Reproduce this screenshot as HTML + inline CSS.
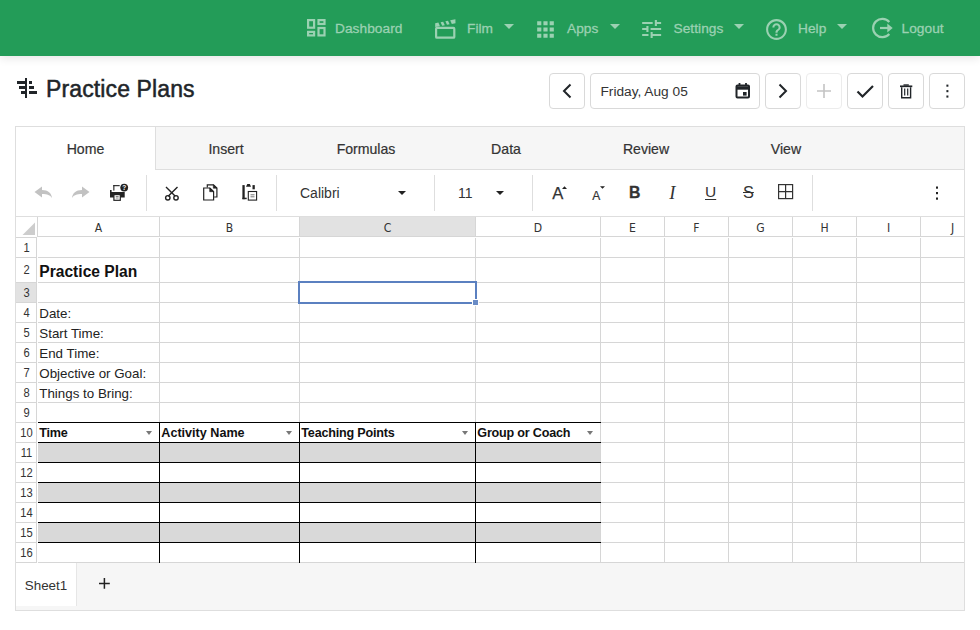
<!DOCTYPE html>
<html><head><meta charset="utf-8"><title>Practice Plans</title>
<style>
*{box-sizing:border-box;margin:0;padding:0}
html,body{width:980px;height:630px;overflow:hidden;background:#fff}
body{font-family:"Liberation Sans",sans-serif;color:#212529;position:relative}
#nav{position:absolute;left:0;top:0;width:980px;height:56px;background:#239c58;box-shadow:0 2px 9px rgba(0,0,0,.11)}
#nav .it{position:absolute;top:0;height:56px;line-height:56px;transform:translateY(0.5px);font-size:13.7px;color:#9bd1b2;white-space:nowrap;letter-spacing:0.06px;-webkit-text-stroke:0.3px #9bd1b2}
#nav svg{position:absolute;overflow:visible}
.caret{position:absolute;width:0;height:0;border-left:5px solid transparent;border-right:5px solid transparent;border-top:5px solid #9bd1b2;top:24px}
#title{position:absolute;left:46px;top:72px;letter-spacing:0.12px;font-size:23px;line-height:34px;color:#212529;white-space:nowrap;font-weight:400;-webkit-text-stroke:0.5px #212529}
.btn{position:absolute;top:73px;height:36px;width:36px;border:1px solid #d9d9d9;border-radius:4px;background:#fff}
.btn svg{position:absolute;left:0;top:0}
#date{position:absolute;left:590px;top:73px;width:170px;height:36px;border:1px solid #d9d9d9;border-radius:4px;background:#fff;font-size:13.7px;line-height:36px;padding-left:9.5px;color:#333}
#ss{position:absolute;left:15px;top:126px;width:950px;height:485px;border:1px solid #dedede;background:#fff;overflow:hidden}
#ss div{position:absolute}
#tabs{left:0;top:0;width:948px;height:43px;background:#f6f6f6;border-bottom:1px solid #dedede}
.tab{top:0;height:42px;width:140px;text-align:center;font-size:14.1px;line-height:44.600px;color:#333;-webkit-text-stroke:0.2px #333}
.tab.on{background:#fff;height:43px;border-right:1px solid #dedede;width:140px}
.sep{width:1px;top:48px;height:36px;background:#dedede}
.tb{font-size:14px;color:#333;line-height:20px;white-space:nowrap}
#ss svg{position:absolute;overflow:visible}
.ch{top:91px;height:19px;text-align:center;font-size:11.8px;line-height:20px;color:#333;font-family:'DejaVu Sans','Liberation Sans',sans-serif;transform:scaleX(.92)}
.rh{left:0;width:21px;text-align:center;font-size:12.4px;color:#333;transform:scaleX(.9)}
.c{left:0;font-size:13.35px;color:#222;white-space:nowrap}
.hd{font-weight:700;font-size:12.6px;color:#111}
.fc{width:0;height:0;border-left:3.6px solid transparent;border-right:3.6px solid transparent;border-top:4.2px solid #777}
#bar{left:0;top:436px;width:948px;height:47px;background:#f6f6f6}
</style></head><body>

<div id="nav">
<svg style="left:306.7px;top:19.2px" width="19" height="18" viewBox="0 0 19 18" fill="none" stroke="#9bd1b2" stroke-width="2.2"><rect x="1.1" y="1.1" width="6" height="7.6"/><rect x="11.5" y="1.1" width="6" height="3.9"/><rect x="1.1" y="12.9" width="6" height="3.5"/><rect x="11.5" y="9" width="6" height="7.4"/></svg>
<div class="it" style="left:335px">Dashboard</div>
<svg style="left:435.2px;top:18px" width="21" height="21" viewBox="0 0 21 21"><rect x="1.1" y="9.9" width="18.2" height="9.8" rx="0.8" fill="none" stroke="#9bd1b2" stroke-width="2.2"/><g fill="#9bd1b2"><path d="M0.20 5.20 L3.40 4.59 L5.00 8.19 L0.20 9.10 Z"/><path d="M5.60 4.17 L8.20 3.68 L9.80 7.28 L7.20 7.77 Z"/><path d="M10.40 3.26 L13.00 2.77 L14.60 6.36 L12.00 6.86 Z"/><path d="M15.20 2.35 L20.40 1.36 L20.50 5.24 L16.80 5.95 Z"/></g></svg>
<div class="it" style="left:467px">Film</div><div class="caret" style="left:503.5px"></div>
<svg style="left:533.1px;top:16.7px" width="25" height="25" viewBox="0 0 24 24" fill="#9bd1b2"><path d="M4 8h4V4H4v4zm6 12h4v-4h-4v4zm-6 0h4v-4H4v4zm0-6h4v-4H4v4zm6 0h4v-4h-4v4zm6-10v4h4V4h-4zm-6 4h4V4h-4v4zm6 6h4v-4h-4v4zm0 6h4v-4h-4v4z"/></svg>
<div class="it" style="left:567px">Apps</div><div class="caret" style="left:610px"></div>
<svg style="left:638.9px;top:17.1px" width="25.3" height="24.1" viewBox="0 0 24 24" preserveAspectRatio="none" fill="#9bd1b2"><path d="M3 17v2h6v-2H3zM3 5v2h10V5H3zm10 16v-2h8v-2h-8v-2h-2v6h2zM7 9v2H3v2h4v2h2V9H7zm14 4v-2H11v2h10zm-6-4h2V7h4V5h-4V3h-2v6z"/></svg>
<div class="it" style="left:673.5px">Settings</div><div class="caret" style="left:733.5px"></div>
<svg style="left:763.9px;top:16.6px" width="25" height="25" viewBox="0 0 24 24" fill="#9bd1b2"><path d="M11 18h2v-2h-2v2zm1-16C6.48 2 2 6.48 2 12s4.48 10 10 10 10-4.48 10-10S17.52 2 12 2zm0 18c-4.41 0-8-3.59-8-8s3.59-8 8-8 8 3.59 8 8-3.59 8-8 8zm0-14c-2.21 0-4 1.79-4 4h2c0-1.100.9-2 2-2s2 .9 2 2c0 2-3 1.750-3 5h2c0-2.250 3-2.500 3-5 0-2.210-1.790-4-4-4z"/></svg>
<div class="it" style="left:798px">Help</div><div class="caret" style="left:836.5px"></div>
<svg style="left:870px;top:16px" width="25" height="25" viewBox="0 0 25 25" fill="none" stroke="#9bd1b2" stroke-width="2.2"><path d="M19.300 6 A9.200 9.200 0 1 0 19.300 18"/><path d="M10 12 H18.500"/><path d="M17.300 7.500 L22.700 12 L17.300 16.500 Z" fill="#9bd1b2" stroke="none"/></svg>
<div class="it" style="left:901.5px">Logout</div>
</div>
<svg style="position:absolute;left:0;top:0" width="60" height="110" viewBox="0 0 60 110" fill="#212529" shape-rendering="crispEdges"><rect x="25" y="78" width="2" height="20"/><rect x="17" y="81" width="8" height="3"/><rect x="19" y="86" width="6" height="3"/><rect x="21" y="91" width="4" height="3"/><rect x="29" y="81" width="3" height="3"/><rect x="29" y="86" width="5" height="3"/><rect x="29" y="91" width="8" height="3"/></svg>
<div id="title">Practice Plans</div>
<div class="btn" style="left:549px"><svg width="34" height="34" viewBox="0 0 34 34" fill="none" stroke="#212529" stroke-width="2"><path d="M20.5 10.5 L14 17 L20.5 23.5"/></svg></div>
<div id="date">Friday, Aug 05<svg style="position:absolute;left:144px;top:9px" width="16" height="17" viewBox="0 0 16 17" fill="none" stroke="#212529" stroke-width="2"><rect x="1.500" y="2.500" width="12.500" height="12" rx="1"/><path d="M1.5 5 H14" stroke-width="3.4"/><path d="M4.5 0 V3 M11 0 V3" stroke-width="1.8"/><rect x="8" y="9" width="3.6" height="3.6" fill="#212529" stroke="none"/></svg></div>
<div class="btn" style="left:765px"><svg width="34" height="34" viewBox="0 0 34 34" fill="none" stroke="#212529" stroke-width="2"><path d="M13.5 10.5 L20 17 L13.5 23.5"/></svg></div>
<div class="btn" style="left:806px;border-color:#ececec"><svg width="34" height="34" viewBox="0 0 34 34" fill="none" stroke="#c4c4c4" stroke-width="1.6"><path d="M10 17 H24 M17 10 V24"/></svg></div>
<div class="btn" style="left:847px"><svg width="34" height="34" viewBox="0 0 34 34" fill="none" stroke="#212529" stroke-width="2.2"><path d="M9.5 17.5 L14.5 22.5 L25 12"/></svg></div>
<div class="btn" style="left:888px"><svg width="34" height="34" viewBox="0 0 34 34" fill="none" stroke="#212529" stroke-width="1.8"><path d="M11 12.300 H23.300" stroke-width="1.700"/><path d="M14.500 11 H19.800" stroke-width="1.400"/><path d="M12.700 13.300 V23.800 H21.600 V13.300" stroke-width="1.400"/><path d="M15.700 14.500 V21.500 M18.700 14.500 V21.500" stroke-width="1.200"/></svg></div>
<div class="btn" style="left:929px"><svg width="34" height="34" viewBox="0 0 34 34" fill="#212529"><rect x="16.400" y="10.600" width="2" height="2.100"/><rect x="16.400" y="16.100" width="2" height="2.100"/><rect x="16.400" y="21.500" width="2" height="2.100"/></svg></div>
<div id="ss">
<div id="tabs"></div>
<div class="tab on" style="left:0px">Home</div>
<div class="tab" style="left:140px">Insert</div>
<div class="tab" style="left:280px">Formulas</div>
<div class="tab" style="left:420px">Data</div>
<div class="tab" style="left:560px">Review</div>
<div class="tab" style="left:700px">View</div>
<div class="sep" style="left:130px"></div>
<div class="sep" style="left:260px"></div>
<div class="sep" style="left:418px"></div>
<div class="sep" style="left:516px"></div>
<div class="sep" style="left:796px"></div>
<svg style="left:0;top:43px" width="948" height="47" viewBox="16 170 948 47"><path d="M34.5 192 L42 186.5 V190 C48 190 51.5 193 52 198 C50 195 47.5 194 42 194 V197.5 Z" fill="#c2c2c2"/><path d="M89.5 192 L82 186.5 V190 C76 190 72.500 193 72 198 C74 195 76.500 194 82 194 V197.500 Z" fill="#c2c2c2"/><g fill="#222"><rect x="110" y="192" width="14.7" height="5.5"/><rect x="110" y="190" width="1.6" height="3"/><rect x="113.3" y="185.1" width="1.1" height="5.5"/><rect x="113.3" y="185.1" width="6.4" height="1.1"/><rect x="113.9" y="194.6" width="6.4" height="5.700" fill="#fff" stroke="#222" stroke-width="1.200"/><rect x="115.7" y="196" width="2.9" height="0.800" fill="#666"/><rect x="115.7" y="197.600" width="2.9" height="0.800" fill="#666"/><circle cx="124.2" cy="187.600" r="3.900"/><text x="124.2" y="190" font-size="6.500" font-weight="700" font-family="Liberation Sans, sans-serif" fill="#fff" text-anchor="middle">?</text></g><g fill="none" stroke="#222" stroke-width="1.400"><path d="M166 187 L175.300 196.300 M177.500 187 L168.200 196.300"/><circle cx="167.800" cy="197.800" r="2.200"/><circle cx="176" cy="197.800" r="2.200"/></g><g fill="#fff" stroke="#222" stroke-width="1.200"><path d="M207.300 187.400 V184.800 H213.500 L216.900 188 V197 H214.200"/><path d="M213.300 184.800 V188.200 H216.900 Z" fill="#222" stroke-width="0.600"/><path d="M203.700 188 H209.900 L213.600 191.500 V200 H203.700 Z"/><path d="M209.700 188 V191.700 H213.600 Z" fill="#222" stroke-width="0.600"/></g><g fill="#222"><rect x="242.400" y="185.100" width="2.300" height="14.100"/><rect x="242.400" y="197.700" width="4.300" height="1.500"/><path d="M246 186.700 L247.300 184 H249.800 L251 186.700 Z"/><rect x="252.500" y="185.100" width="2.300" height="4.200"/><rect x="248.300" y="191.500" width="8.300" height="8.600" fill="#fff" stroke="#222" stroke-width="1.100"/><rect x="250.500" y="194.300" width="4" height="1" fill="#777"/><rect x="250.500" y="196.300" width="4" height="1" fill="#777"/></g><path d="M398 191 H406 L402 195 Z" fill="#222"/><path d="M496 191 H504 L500 195 Z" fill="#222"/><path d="M562 189 L564.500 186.300 L567 189 Z" fill="#222"/><path d="M600 186.200 L605 186.200 L602.500 188.800 Z" fill="#222"/><g fill="none" stroke="#333" stroke-width="1.200"><rect x="778.600" y="184.600" width="14" height="14"/><path d="M785.600 184.600 V198.600 M778.600 191.600 H792.600"/></g><g fill="#222"><rect x="936" y="186.500" width="2" height="2.200"/><rect x="936" y="192" width="2" height="2.200"/><rect x="936" y="197.500" width="2" height="2.200"/></g></svg>
<div class="tb" style="left:284px;top:56px">Calibri</div>
<div class="tb" style="left:442px;top:56px">11</div>
<div class="tb" style="left:536.3px;top:57.3px;font-size:16.6px;-webkit-text-stroke:0.25px #333">A</div>
<div class="tb" style="left:576.3px;top:59px;font-size:12px;-webkit-text-stroke:0.2px #333">A</div>
<div class="tb" style="left:613px;top:56px;font-size:15.8px;font-weight:700;-webkit-text-stroke:0.3px #333">B</div>
<div class="tb" style="left:653.3px;top:55.6px;font-size:18.5px;font-style:italic;font-family:'Liberation Serif',serif">I</div>
<div class="tb" style="left:689px;top:55px;font-size:15.5px;text-decoration:underline;text-underline-offset:2px">U</div>
<div class="tb" style="left:727px;top:55px;font-size:16.3px;text-decoration:line-through">S</div>
<div style="left:0;top:89px;width:948px;height:1px;background:#dedede"></div>
<svg style="left:0;top:90px" width="948" height="346" viewBox="16 217 948 346" shape-rendering="crispEdges"><rect x="300" y="217" width="175" height="19" fill="#e2e2e2"/><rect x="16" y="283" width="20" height="19" fill="#e2e2e2"/><rect x="38" y="443" width="563" height="19" fill="#d9d9d9"/><rect x="38" y="483" width="563" height="19" fill="#d9d9d9"/><rect x="38" y="523" width="563" height="19" fill="#d9d9d9"/><rect x="37" y="236" width="927" height="1" fill="#d6d6d6"/><rect x="16" y="237" width="21" height="1" fill="#d6d6d6"/><rect x="16" y="257" width="948" height="1" fill="#d6d6d6"/><rect x="16" y="282" width="948" height="1" fill="#d6d6d6"/><rect x="16" y="302" width="948" height="1" fill="#d6d6d6"/><rect x="16" y="322" width="948" height="1" fill="#d6d6d6"/><rect x="16" y="342" width="948" height="1" fill="#d6d6d6"/><rect x="16" y="362" width="948" height="1" fill="#d6d6d6"/><rect x="16" y="382" width="948" height="1" fill="#d6d6d6"/><rect x="16" y="402" width="948" height="1" fill="#d6d6d6"/><rect x="16" y="422" width="948" height="1" fill="#d6d6d6"/><rect x="16" y="442" width="948" height="1" fill="#d6d6d6"/><rect x="16" y="462" width="948" height="1" fill="#d6d6d6"/><rect x="16" y="482" width="948" height="1" fill="#d6d6d6"/><rect x="16" y="502" width="948" height="1" fill="#d6d6d6"/><rect x="16" y="522" width="948" height="1" fill="#d6d6d6"/><rect x="16" y="542" width="948" height="1" fill="#d6d6d6"/><rect x="16" y="562" width="948" height="1" fill="#d6d6d6"/><rect x="37" y="217" width="1" height="20" fill="#d6d6d6"/><rect x="36" y="237" width="1" height="326" fill="#d6d6d6"/><rect x="159" y="217" width="1" height="346" fill="#d6d6d6"/><rect x="299" y="217" width="1" height="346" fill="#d6d6d6"/><rect x="475" y="217" width="1" height="346" fill="#d6d6d6"/><rect x="600" y="217" width="1" height="346" fill="#d6d6d6"/><rect x="664" y="217" width="1" height="346" fill="#d6d6d6"/><rect x="728" y="217" width="1" height="346" fill="#d6d6d6"/><rect x="792" y="217" width="1" height="346" fill="#d6d6d6"/><rect x="856" y="217" width="1" height="346" fill="#d6d6d6"/><rect x="920" y="217" width="1" height="346" fill="#d6d6d6"/><rect x="37" y="238" width="1" height="325" fill="#fff"/><rect x="38" y="237" width="926" height="1" fill="#fff"/><rect x="38" y="422" width="563" height="1" fill="#000"/><rect x="38" y="442" width="563" height="1" fill="#000"/><rect x="38" y="462" width="563" height="1" fill="#000"/><rect x="38" y="482" width="563" height="1" fill="#000"/><rect x="38" y="502" width="563" height="1" fill="#000"/><rect x="38" y="522" width="563" height="1" fill="#000"/><rect x="38" y="542" width="563" height="1" fill="#000"/><rect x="159" y="422" width="1" height="141" fill="#000"/><rect x="299" y="422" width="1" height="141" fill="#000"/><rect x="475" y="422" width="1" height="141" fill="#000"/><path d="M35 222.500 V235 H22.500 Z" fill="#cdcdcd" shape-rendering="auto"/><g fill="#5b80c0"><rect x="298" y="281" width="179" height="2"/><rect x="298" y="281" width="2" height="23"/><rect x="475" y="281" width="2" height="18"/><rect x="298" y="302" width="174" height="2"/></g><rect x="472" y="299" width="7" height="7" fill="#fff"/><rect x="473" y="300" width="5" height="5" fill="#6a8cc6"/></svg>
<div class="ch" style="left:22px;width:121px">A</div>
<div class="ch" style="left:144px;width:139px">B</div>
<div class="ch" style="left:284px;width:175px">C</div>
<div class="ch" style="left:460px;width:124px">D</div>
<div class="ch" style="left:585px;width:63px">E</div>
<div class="ch" style="left:649px;width:63px">F</div>
<div class="ch" style="left:713px;width:63px">G</div>
<div class="ch" style="left:777px;width:63px">H</div>
<div class="ch" style="left:841px;width:63px">I</div>
<div class="ch" style="left:905px;width:63px">J</div>
<div class="rh" style="top:110px;height:20px;line-height:22px">1</div>
<div class="rh" style="top:131px;height:24px;line-height:24px">2</div>
<div class="rh" style="top:156px;height:19px;line-height:21px">3</div>
<div class="rh" style="top:176px;height:19px;line-height:21px">4</div>
<div class="rh" style="top:196px;height:19px;line-height:21px">5</div>
<div class="rh" style="top:216px;height:19px;line-height:21px">6</div>
<div class="rh" style="top:236px;height:19px;line-height:21px">7</div>
<div class="rh" style="top:256px;height:19px;line-height:21px">8</div>
<div class="rh" style="top:276px;height:19px;line-height:21px">9</div>
<div class="rh" style="top:296px;height:19px;line-height:21px">10</div>
<div class="rh" style="top:316px;height:19px;line-height:21px">11</div>
<div class="rh" style="top:336px;height:19px;line-height:21px">12</div>
<div class="rh" style="top:356px;height:19px;line-height:21px">13</div>
<div class="rh" style="top:376px;height:19px;line-height:21px">14</div>
<div class="rh" style="top:396px;height:19px;line-height:21px">15</div>
<div class="rh" style="top:416px;height:19px;line-height:21px">16</div>
<div class="c" style="left:23.3px;top:135.5px;height:19px;line-height:21px;font-weight:700;font-size:15.6px;color:#111;top:131.7px;height:24px;line-height:26px">Practice Plan</div>
<div class="c" style="left:23.3px;top:175.5px;height:19px;line-height:21px;">Date:</div>
<div class="c" style="left:23.3px;top:195.5px;height:19px;line-height:21px;">Start Time:</div>
<div class="c" style="left:23.3px;top:215.5px;height:19px;line-height:21px;">End Time:</div>
<div class="c" style="left:23.3px;top:235.5px;height:19px;line-height:21px;">Objective or Goal:</div>
<div class="c" style="left:23.3px;top:255.5px;height:19px;line-height:21px;">Things to Bring:</div>
<div class="c hd" style="left:23.3px;top:295.5px;height:19px;line-height:21px;letter-spacing:-0.2px">Time</div>
<div class="c hd" style="left:145.3px;top:295.5px;height:19px;line-height:21px;">Activity Name</div>
<div class="c hd" style="left:285.3px;top:295.5px;height:19px;line-height:21px;letter-spacing:-0.2px">Teaching Points</div>
<div class="c hd" style="left:461.3px;top:295.5px;height:19px;line-height:21px;letter-spacing:-0.2px">Group or Coach</div>
<div class="fc" style="left:129.9px;top:304px"></div>
<div class="fc" style="left:269.9px;top:304px"></div>
<div class="fc" style="left:445.9px;top:304px"></div>
<div class="fc" style="left:570.9px;top:304px"></div>
<div id="bar"></div>
<div style="left:0;top:436px;width:61px;height:43px;background:#fff;border-right:1px solid #e6e6e6;text-align:center;font-size:13.4px;line-height:45px;color:#333">Sheet1</div>
<svg style="left:83.2px;top:451.4px" width="11" height="11" viewBox="0 0 11 11" stroke="#222" stroke-width="1.500"><path d="M0 5.400 H10.800 M5.400 0 V10.800"/></svg>
</div>
</body></html>
